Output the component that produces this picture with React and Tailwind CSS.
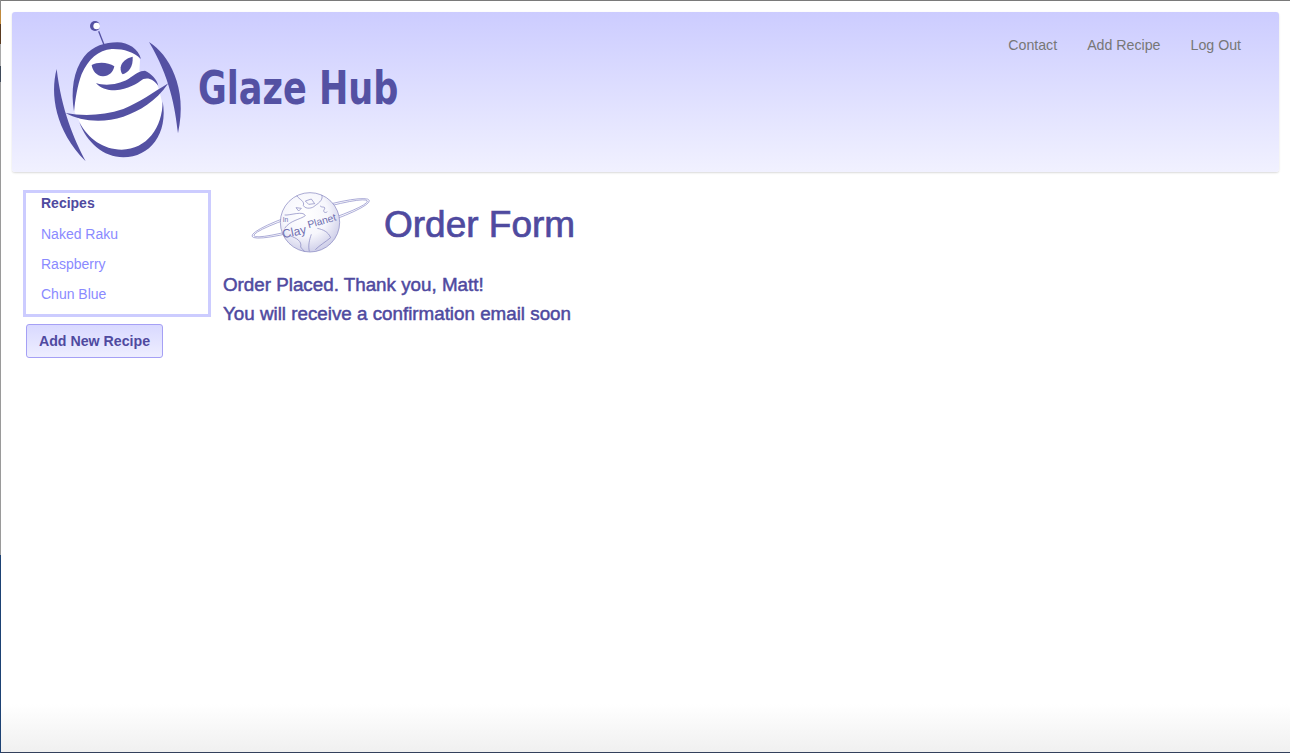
import React from "react";

const sans = "font-['Liberation_Sans',Arial,sans-serif]";

function Robot() {
  return (
    <svg viewBox="0 0 450 450" className="w-[150px] h-[150px] shrink-0" fill="#5451a3">
      <path fill="#ffffff" d="M220 92 C150 96 100 190 104 295 L120 325 C140 385 190 420 250 420 C330 415 372 340 366 265 C362 245 358 230 352 212 L320 180 L298 172 L300 137 C285 110 255 90 220 92Z" />
      <path fill="none" stroke="#5451a3" strokeWidth="4" d="M176 52 L192 92" />
      <circle cx="165" cy="36" r="15" />
      <circle cx="170" cy="36" r="10" fill="#ffffff" />
      <path d="M102 292 C92 230 100 170 132 128 C160 95 195 85 232 85 C265 85 295 105 303 135 C280 113 250 104 215 105 C175 108 145 135 125 180 C112 215 106 255 102 292Z" />
      <path d="M118 325 C140 385 190 430 250 430 C330 430 385 360 368 262 C368 340 320 407 245 407 C190 407 145 375 118 325Z" />
      <path d="M77 297 C130 307 190 305 250 285 C300 265 340 235 385 208 C345 265 300 290 250 308 C190 328 120 322 77 297Z" />
      <path d="M168 207 C190 215 230 215 265 195 C285 180 300 170 315 170 C335 180 350 195 355 215 C340 195 325 190 310 195 C290 210 265 225 225 229 C200 229 180 222 168 207Z" />
      <path d="M155 153 C175 143 205 145 223 157 C220 175 205 188 188 187 C170 186 157 170 155 153Z" />
      <path d="M278 128 C258 132 244 145 242 160 C241 170 244 178 248 181 C265 175 280 160 278 128Z" />
      <path d="M50 165 C30 240 45 350 137 442 C100 370 65 290 50 165Z" />
      <path d="M327 84 C385 120 445 220 414 358 C405 280 390 190 327 84Z" />
    </svg>
  );
}

function Planet() {
  return (
    <svg viewBox="0 0 420 210" className="w-[140px] h-[70px] shrink-0">
      <defs>
        <radialGradient id="globe" cx="42%" cy="35%" r="70%">
          <stop offset="0%" stopColor="#ffffff" />
          <stop offset="55%" stopColor="#f6f6fc" />
          <stop offset="100%" stopColor="#c9c9e6" />
        </radialGradient>
      </defs>
      <g fill="none" stroke="#8f8fca" strokeWidth="2">
        <ellipse cx="212" cy="100" rx="184" ry="26" transform="rotate(-17 212 100)" />
        <ellipse cx="212" cy="100" rx="178" ry="20" transform="rotate(-17 212 100)" />
      </g>
      <circle cx="210" cy="112" r="89" fill="url(#globe)" stroke="#8080bd" strokeWidth="2" />
      <g fill="none" stroke="#8080bd" strokeWidth="2">
        <path d="M170 32 C178 44 195 48 190 62 C198 74 218 70 225 62 C240 52 250 42 245 30" />
        <path d="M196 48 L214 42 L224 56 L206 58Z" />
        <path d="M168 68 L184 70 L176 78Z" />
        <path d="M240 62 C246 70 256 62 254 72 C246 80 256 86 262 80" />
        <path d="M134 90 C150 92 190 76 196 92 C180 104 150 106 134 130" />
        <path d="M232 130 C250 134 264 140 272 158 C255 172 240 180 226 194" />
        <path d="M150 152 C170 160 186 168 182 186 C186 192 190 196 194 199" />
        <path d="M214 148 C208 165 204 182 208 199" />
      </g>
      <g fill="#6f6fb0" fontFamily="'Liberation Sans',Arial,sans-serif">
        <text x="128" y="112" fontSize="20">In</text>
        <text x="130" y="160" fontSize="36" transform="rotate(-12 130 160)">Clay</text>
        <text x="206" y="130" fontSize="31" transform="rotate(-16 206 130)">Planet</text>
      </g>
    </svg>
  );
}

export default function App() {
  return (
    <div className={`w-[1290px] h-[753px] overflow-hidden flex bg-white ${sans}`}>
      <div className="w-px flex flex-col shrink-0">
        <div className="h-[10px] bg-[#8a8a8a]" />
        <div className="h-[14px] bg-[#c08a3c]" />
        <div className="h-[20px] bg-[#5a3a20]" />
        <div className="h-[22px] bg-[#a9a9a9]" />
        <div className="h-[16px] bg-[#3f4a5a]" />
        <div className="h-[473px] bg-[#9a9a9a]" />
        <div className="flex-1 bg-[#1d4274]" />
      </div>
      <div className="flex-1 flex flex-col min-w-0">
        <div className="h-px bg-[#7a7a7a]" />
        <header className="mt-[11px] ml-[11px] w-[1267px] h-[160px] shrink-0 rounded-[3px] bg-gradient-to-b from-[#ccccff] to-[#f1f1ff] shadow-[0_1px_2px_rgba(0,0,0,0.15)] flex items-start">
          <div className="ml-[28px] mt-[2px]">
            <Robot />
          </div>
          <div className="ml-[8px] mt-[48px] w-[204px] text-[47px] leading-[56px] font-bold text-[#5451a3] font-['DejaVu_Sans_Condensed','DejaVu_Sans',sans-serif] origin-left scale-x-[0.83] whitespace-nowrap">
            Glaze Hub
          </div>
          <nav className="ml-auto mr-[38px] mt-[23px] flex gap-[30px] text-[14.2px] leading-[20px] text-[#777777]">
            <a>Contact</a>
            <a>Add Recipe</a>
            <a>Log Out</a>
          </nav>
        </header>
        <div className="flex-1 flex items-start min-h-0">
          <aside className="ml-[22px] mt-[18px] w-[188px] shrink-0">
            <div className="h-[127px] border-[3px] border-[#ccccff] pl-[15px] text-sm">
              <div className="h-[20px] leading-[20px] font-bold text-[#4f4a9f]">Recipes</div>
              <ul className="mt-[11px] flex flex-col gap-[10px] text-[#8a8aff]">
                <li className="h-[20px] leading-[20px]">Naked Raku</li>
                <li className="h-[20px] leading-[20px]">Raspberry</li>
                <li className="h-[20px] leading-[20px]">Chun Blue</li>
              </ul>
            </div>
            <button className={`mt-[7px] ml-[3px] w-[137px] h-[34px] pt-px rounded-[3px] border border-[#a5a0f5] bg-gradient-to-b from-[#d9d9ff] to-[#eeeeff] text-[14.2px] font-bold text-[#4f4a9f] ${sans}`}>
              Add New Recipe
            </button>
          </aside>
          <main className="ml-[12px] mt-[13px] flex-1">
            <div className="flex items-center h-[70px]">
              <div className="ml-[17px]">
                <Planet />
              </div>
              <h1 className="ml-[4px] mt-[9px] text-[37px] leading-[44px] text-[#4f4a9f] [-webkit-text-stroke:0.7px_#4f4a9f]">Order Form</h1>
            </div>
            <div className="mt-[16px] text-[18.8px] leading-[28.5px] text-[#4f4a9f] [-webkit-text-stroke:0.5px_#4f4a9f]">
              <p>Order Placed. Thank you, Matt!</p>
              <p>You will receive a confirmation email soon</p>
            </div>
          </main>
        </div>
        <div className="h-[48px] shrink-0 bg-gradient-to-b from-white to-[#f0f0f0]" />
        <div className="h-px bg-[#33405c]" />
      </div>
    </div>
  );
}
